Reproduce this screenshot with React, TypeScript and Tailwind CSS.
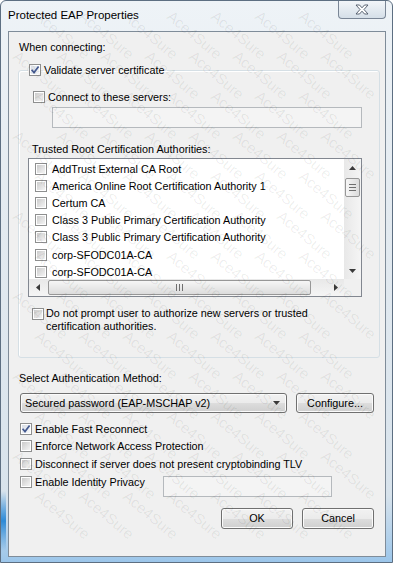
import React from 'react';

function Box({ checked = false }: { checked?: boolean }) {
  return (
    <span className="relative inline-block w-[12px] h-[12px] shrink-0 border border-[#8e8f8f] bg-white p-px">
      <span
        className={
          checked
            ? 'block w-full h-full bg-gradient-to-br from-[#d9dee6] to-[#f6f8fa]'
            : 'block w-full h-full bg-gradient-to-br from-[#cbcbcb] to-[#f4f4f4]'
        }
      />
      {checked && (
        <svg className="absolute left-0 top-0 w-[10px] h-[10px]" viewBox="0 0 10 10">
          <path d="M1.6 4.8 L4 7.6 L8.6 1.6" stroke="#44598f" strokeWidth="1.7" fill="none" />
        </svg>
      )}
    </span>
  );
}

function Tri({ dir }: { dir: 'up' | 'down' | 'left' | 'right' }) {
  const pts = {
    up: '0,4 3.5,0 7,4',
    down: '0,0 7,0 3.5,4',
    left: '4,0 4,7 0,3.5',
    right: '0,0 0,7 4,3.5',
  }[dir];
  const vertical = dir === 'up' || dir === 'down';
  return (
    <svg width={vertical ? 7 : 4} height={vertical ? 4 : 7} viewBox={vertical ? '0 0 7 4' : '0 0 4 7'}>
      <polygon points={pts} fill="#3a3a3a" />
    </svg>
  );
}

function Button({ label, w }: { label: string; w: string }) {
  return (
    <button
      className={`${w} h-[21px] rounded-[3px] border border-[#707070] bg-[linear-gradient(180deg,#f2f2f2_0%,#ebebeb_50%,#dddddd_51%,#cfcfcf_100%)] shadow-[inset_0_0_0_1px_#fbfbfb] text-[10.8px] leading-[14px] text-black`}
    >
      {label}
    </button>
  );
}

const certs = [
  'AddTrust External CA Root',
  'America Online Root Certification Authority 1',
  'Certum CA',
  'Class 3 Public Primary Certification Authority',
  'Class 3 Public Primary Certification Authority',
  'corp-SFODC01A-CA',
  'corp-SFODC01A-CA',
];

// faint diagonal watermark, kept fully inside the picture
const marks: { x: number; y: number }[] = [];
for (let r = 0; r < 15; r++) {
  for (let c = 0; c < 10; c++) {
    const x = c * 44 + (r % 2) * 22 - 8;
    const y = r * 40 + 2;
    if (x >= 2 && x + 52 <= 391 && y + 48 <= 561) marks.push({ x, y });
  }
}

export default function App() {
  return (
    <div className="relative w-[393px] h-[563px] overflow-hidden rounded-t-[6px] border border-[#5d6f82] bg-[linear-gradient(180deg,#eef3f7_0%,#e3eaf0_40%,#d8e3ec_88%,#9cc6ea_100%)] font-['Liberation_Sans',Arial,sans-serif] text-black">
      {/* title bar */}
      <div className="flex h-[30px]">
        <div className="flex-1 pl-[7px] pt-[7px] text-[11.5px] leading-[14px]">Protected EAP Properties</div>
        <div className="mr-[6px] -mt-px flex h-[19px] w-[48px] items-center justify-center rounded-b-[4px] border border-t-0 border-[#7a8696] bg-[linear-gradient(180deg,#f4f7fa,#d5dfe8)]">
          <svg width="14" height="11" viewBox="0 0 14 11">
            <path
              d="M1 1 H4.5 L7 3.8 L9.5 1 H13 L9 5.5 L13 10 H9.5 L7 7.2 L4.5 10 H1 L5 5.5 Z"
              fill="#ffffff"
              stroke="#4a5564"
              strokeWidth="0.9"
            />
          </svg>
        </div>
      </div>

      {/* client area */}
      <div className="ml-[7px] flex h-[526px] w-[378px] flex-col border border-[#7f8c99] bg-[#f0f0f0] text-[10.8px]">
        <p className="ml-[10px] mt-[8px] leading-[14px]">When connecting:</p>

        <fieldset className="ml-[9px] mt-[9px] w-[362px] min-w-0 rounded-[3px] border border-[#d5dfe5] pb-[24px] shadow-[inset_1px_1px_0_#ffffff]">
          <legend className="ml-[9px] px-px pr-[3px]">
            <span className="flex h-[14px] items-center gap-[3px] leading-[14px]">
              <Box checked />
              Validate server certificate
            </span>
          </legend>

          <div className="ml-[14px] mt-[13px] flex h-[14px] items-center gap-[3px] leading-[14px]">
            <Box />
            Connect to these servers:
          </div>
          <div className="ml-[33px] mt-[3px] h-[21px] w-[310px] border border-[#b5b9bd] bg-[#f4f4f4]" />

          <p className="ml-[13px] mt-[14px] leading-[14px]">Trusted Root Certification Authorities:</p>

          <div className="ml-[9px] mt-[2px] flex h-[139px] w-[334px] flex-col border border-[#828790] bg-white">
            <div className="flex h-[120px]">
              <div className="flex-1 overflow-hidden pt-px">
                {certs.map((c, i) => (
                  <div key={i} className="flex h-[17.2px] items-center gap-[5px] whitespace-nowrap pl-[6px] leading-[14px]">
                    <Box />
                    {c}
                  </div>
                ))}
              </div>
              <div className="flex w-[17px] flex-col bg-[linear-gradient(90deg,#e8e8e8,#f5f5f5)]">
                <div className="flex h-[17px] items-center justify-center">
                  <Tri dir="up" />
                </div>
                <div className="mx-auto mt-[2px] flex h-[19px] w-[15px] flex-col items-center justify-center gap-[2px] rounded-[2px] border border-[#979797] bg-[linear-gradient(90deg,#f6f6f6,#dcdcdc)]">
                  <span className="block h-px w-[7px] bg-[#6f6f6f]" />
                  <span className="block h-px w-[7px] bg-[#6f6f6f]" />
                  <span className="block h-px w-[7px] bg-[#6f6f6f]" />
                </div>
                <div className="flex-1" />
                <div className="flex h-[17px] items-center justify-center">
                  <Tri dir="down" />
                </div>
              </div>
            </div>
            <div className="flex h-[17px]">
              <div className="flex flex-1 items-center bg-[linear-gradient(180deg,#e8e8e8,#f5f5f5)]">
                <div className="flex w-[17px] items-center justify-center">
                  <Tri dir="left" />
                </div>
                <div className="ml-[2px] flex h-[15px] w-[263px] items-center justify-center gap-[2px] rounded-[2px] border border-[#979797] bg-[linear-gradient(180deg,#f6f6f6,#dcdcdc)]">
                  <span className="block h-[7px] w-px bg-[#6f6f6f]" />
                  <span className="block h-[7px] w-px bg-[#6f6f6f]" />
                  <span className="block h-[7px] w-px bg-[#6f6f6f]" />
                </div>
                <div className="flex-1" />
                <div className="flex w-[17px] items-center justify-center">
                  <Tri dir="right" />
                </div>
              </div>
              <div className="w-[17px] bg-[#f0f0f0]" />
            </div>
          </div>

          <div className="ml-[13px] mt-[10px] flex items-start gap-[2px] leading-[13px]">
            <span className="mt-px">
              <Box />
            </span>
            <span className="whitespace-nowrap">
              Do not prompt user to authorize new servers or trusted
              <br />
              certification authorities.
            </span>
          </div>
        </fieldset>

        <p className="ml-[10px] mt-[13px] leading-[14px]">Select Authentication Method:</p>

        <div className="ml-[11px] mt-[8px] flex items-center gap-[9px]">
          <div className="flex h-[20px] w-[267px] items-center justify-between rounded-[3px] border border-[#707070] bg-[linear-gradient(180deg,#f2f2f2_0%,#ebebeb_50%,#dddddd_51%,#cfcfcf_100%)] pl-[4px] pr-[6px] leading-[14px] shadow-[inset_0_0_0_1px_#fbfbfb]">
            <span>Secured password (EAP-MSCHAP v2)</span>
            <Tri dir="down" />
          </div>
          <button className="h-[20px] w-[78px] rounded-[3px] border border-[#707070] bg-[linear-gradient(180deg,#f2f2f2_0%,#ebebeb_50%,#dddddd_51%,#cfcfcf_100%)] text-[10.8px] leading-[14px] shadow-[inset_0_0_0_1px_#fbfbfb]">
            Configure...
          </button>
        </div>

        <div className="ml-[11px] mt-[7px] flex flex-col leading-[14px]">
          <div className="flex h-[17.6px] items-center gap-[3px]">
            <Box checked />
            Enable Fast Reconnect
          </div>
          <div className="flex h-[17.6px] items-center gap-[3px]">
            <Box />
            Enforce Network Access Protection
          </div>
          <div className="flex h-[17.6px] items-center gap-[3px]">
            <Box />
            Disconnect if server does not present cryptobinding TLV
          </div>
          <div className="flex items-start">
            <div className="flex h-[17.6px] w-[143px] items-center gap-[3px]">
              <Box />
              Enable Identity Privacy
            </div>
            <div className="mt-[3px] h-[21px] w-[169px] border border-[#b5b9bd] bg-[#f4f4f4]" />
          </div>
        </div>

        <div className="mt-[11px] flex justify-end gap-[9px] pr-[11px]">
          <Button label="OK" w="w-[72px]" />
          <Button label="Cancel" w="w-[72px]" />
        </div>
      </div>

      {/* frame glow, left edge */}
      <div className="pointer-events-none absolute left-0 top-[490px] h-[60px] w-[5px] bg-[linear-gradient(180deg,transparent,#2d8ad6,transparent)]" />

      {/* watermark */}
      <div className="pointer-events-none absolute inset-0 overflow-hidden">
        {marks.map((m, i) => (
          <span
            key={i}
            className="absolute origin-left rotate-[40deg] whitespace-nowrap text-[15px] text-black/[0.07]"
            style={{ left: m.x, top: m.y }}
          >
            Ace4Sure
          </span>
        ))}
      </div>
    </div>
  );
}
